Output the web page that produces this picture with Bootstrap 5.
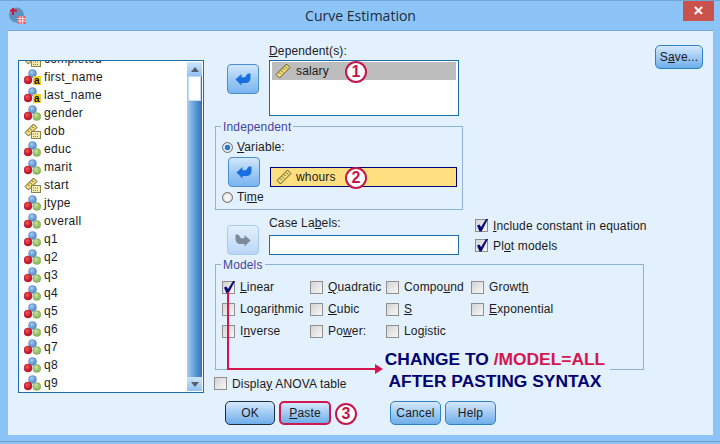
<!DOCTYPE html>
<html lang="en">
<head>
<meta charset="UTF-8" />
<meta name="viewport" content="width=device-width, initial-scale=1" />
<title>Curve Estimation</title>
<link href="https://cdn.jsdelivr.net/npm/bootstrap@5.3.0/dist/css/bootstrap.min.css" rel="stylesheet" />
<style>
  html, body { height: 444px; overflow: hidden; }
  body { background: #8cc4f7; font: 12px/14px "Liberation Sans", Arial, sans-serif; color: #1b1b1b; letter-spacing: .15px; }
  u { text-underline-offset: 1px; }

  .win { height: 442px; border-top: 1px solid #6fa6da; border-bottom: 1px solid #6f9ec9; }
  .titlebar { height: 29px; }
  .app-icon { margin-left: 9px; margin-top: 6px; flex: none; }
  .title-text { font: 14px/29px "Open Sans", sans-serif; letter-spacing: 0; color: #1c2c3c; margin-left: 12px; }
  .close-x { width: 31px; height: 20px; margin: 0 6px 0 0; background: #c9524a; color: #fff; font: 700 17px/20px "Liberation Sans", sans-serif; text-align: center; }
  .client { height: 405px; margin: 0 7px 0 8px; background: #e3f0fd; border-top: 1px solid #74a6d6; padding: 0 10px; position: relative; }

  .var-box { width: 186px; height: 333px; flex: none; margin-top: 29px; border: 1px solid #1c6ea8; background: #fff; overflow: hidden; }
  .var-items { flex: 1; margin-top: -11px; padding-left: 5px; overflow: hidden; }
  .var-row { height: 18px; line-height: 18px; gap: 3px; font-size: 12px; letter-spacing: .3px; white-space: nowrap; }
  .var-row svg { flex: none; }
  .sbar { width: 15px; flex: none; margin: 1px 1px 1px 0; background: linear-gradient(90deg, #a8cdf0, #5c9ad6 55%, #2f74b8); }
  .sbtn { height: 14px; background: linear-gradient(#cfe5fb, #8fc1f2); display: flex; align-items: center; justify-content: center; }
  .sthumb { height: 25px; margin: 0 1px; background: #fff; border: 1px solid #c3dcf4; }
  .tri-up { border: 4px solid transparent; border-top: 0; border-bottom: 5px solid #56606b; }
  .tri-dn { border: 4px solid transparent; border-bottom: 0; border-top: 5px solid #56606b; }

  .right-pane { margin-left: 10px; width: 489px; flex: none; }
  .dep-row { height: 87px; padding-top: 13px; }
  .arrow-btn { width: 32px; height: 30px; flex: none; padding: 0; border: 1px solid #4a8fd0; border-radius: 4px; background: linear-gradient(#d3e7fb, #a0cbf5 50%, #7ab5f0); color: #1a6fe0; display: flex; align-items: center; justify-content: center; }
  .arrow-btn.is-off { border-color: #a9cbea; background: linear-gradient(#e3f0fd, #b9d6f5); color: #7d8b99; }
  .dep-arrow { margin: 20px 0 0 13px; }
  .case-arrow { margin: 6px 0 0 13px; }
  .field-col { width: 190px; margin-left: 10px; }
  .field-lbl { height: 14px; margin-bottom: 2px; white-space: nowrap; }
  .dep-list { height: 56px; border: 1px solid #1c6ea8; background: #fff; padding: 1px 2px; }
  .dep-sel { height: 18px; background: #bdbdbd; padding-left: 3px; gap: 5px; line-height: 18px; }

  .dlg-group { border: 1px solid #8db3d2; border-radius: 0; margin-left: 1px; padding: 0; }
  .dlg-group legend { float: none; width: auto; font: 12px/14px "Liberation Sans", sans-serif; letter-spacing: .15px; color: #45459d; margin: 0 0 0 5px; padding: 2px 2px 0; }
  .ind-group { width: 248px; height: 92px; }
  .pick-row { height: 14px; margin-top: 6px; margin-left: 6px; gap: 4px; }
  .ind-mid { margin: 3px 0 3px 12px; height: 30px; }
  .ind-field { width: 187px; height: 20px; margin: 10px 0 0 10px; border: 1px solid #00007f; background: #ffdf80; padding-left: 5px; gap: 4px; line-height: 19px; }
  .time-row { margin-top: 3px; }

  .case-row { height: 46px; padding-top: 9px; }
  .case-col { margin-left: 10px; width: 190px; }
  .case-input { height: 20px; border: 1px solid #1c6ea8; background: #fff; }
  .case-lbl { height: 14px; margin-top: -3px; margin-bottom: 5px; }
  .opts { margin-left: 16px; gap: 7px; }
  .opt-line { gap: 5px; height: 13px; white-space: nowrap; }

  .models-group { width: 429px; height: 114px; }
  .model-grid { display: grid; grid-template-columns: 88px 76px 85px auto; grid-auto-rows: 22px; margin: 4px 0 0 6px; align-items: center; }
  .model-cell { gap: 5px; white-space: nowrap; }
  .box-off, .box-on { width: 13px; height: 13px; flex: none; display: block; margin: 0; border: 1px solid #8f8f8f; background: linear-gradient(135deg, #d4d4d4, #f7f7f7); }
  .box-on svg { display: block; margin: -1px; overflow: visible; }
  .pick-dot { width: 11px; height: 11px; flex: none; border-radius: 50%; border: 1px solid #6f6f6f; background: radial-gradient(circle, #f4f4f4 40%, #cfcfcf 80%); }
  .pick-dot.is-on { background: radial-gradient(circle, #2a78c8 0 2.6px, #dce6f0 3px); }
  .anova-line { margin-top: 7px; height: 13px; gap: 5px; }

  .dlg-btn { height: 24px; width: 51px; flex: none; padding: 0; border: 1px solid #2b82c5; border-radius: 5px; background: linear-gradient(#d6e8fb, #a6cdf5 45%, #6faeea); font: 12px/14px "Liberation Sans", sans-serif; letter-spacing: .15px; color: #1b1b1b; }
  .dlg-btn:hover { background: linear-gradient(#d6e8fb, #a6cdf5 45%, #6faeea); color: #1b1b1b; border-color: #2b82c5; }
  .save-btn { margin-left: auto; margin-top: 1px; width: 48px; }
  .btn-default { border-color: #1b2f45; width: 50px; }
  .btn-paste { border: 2px solid #d0174f; width: 52px; }
  .btn-bar { margin: 11px 0 0 11px; gap: 4px; }
  .gap-big { margin-left: 55px; }

  .note-dot { position: absolute; width: 22px; height: 22px; border-radius: 50%; background: #fff; border: 2px solid #c4164b; color: #c4164b; font: 700 16px/18px "Liberation Sans", sans-serif; text-align: center; letter-spacing: 0; }
  .dot-a { left: 337px; top: 30px; }
  .dot-b { left: 337px; top: 136px; }
  .dot-c { left: 327px; top: 372px; }
  .note-v { position: absolute; left: 219px; top: 261px; width: 2px; height: 78px; background: #d6154f; }
  .note-h { position: absolute; left: 219px; top: 337px; width: 150px; height: 2px; background: #d6154f; }
  .note-head { position: absolute; left: 367px; top: 333px; border: 5px solid transparent; border-left: 8px solid #d6154f; border-right: 0; }
  .note-text { position: absolute; left: 372px; top: 317px; width: 230px; background: #e3f0fd; text-align: center; font: 700 17.4px/22px "Liberation Sans", sans-serif; letter-spacing: 0; color: #00006e; }
  .note-text b { color: #d6154f; }
</style>
</head>
<body>

<svg width="0" height="0" class="position-absolute">
  <defs>
    <radialGradient id="gBlue" cx=".4" cy=".35"><stop offset="0" stop-color="#a9cbee"/><stop offset="1" stop-color="#5f93cf"/></radialGradient>
    <radialGradient id="gRed" cx=".4" cy=".35"><stop offset="0" stop-color="#ee5a5a"/><stop offset="1" stop-color="#c3142c"/></radialGradient>
    <radialGradient id="gGreen" cx=".4" cy=".35"><stop offset="0" stop-color="#cbe2a0"/><stop offset="1" stop-color="#8fbb62"/></radialGradient>
    <symbol id="ico-balls" viewBox="0 0 17 16">
      <circle cx="8.5" cy="4.5" r="4" fill="url(#gBlue)" stroke="#5a86b8" stroke-width=".5"/>
      <circle cx="12.8" cy="11.5" r="4" fill="url(#gGreen)" stroke="#7da653" stroke-width=".5"/>
      <circle cx="4" cy="11" r="4" fill="url(#gRed)" stroke="#a81228" stroke-width=".5"/>
    </symbol>
    <symbol id="ico-str" viewBox="0 0 17 16">
      <circle cx="8.5" cy="4.5" r="4" fill="url(#gBlue)" stroke="#5a86b8" stroke-width=".5"/>
      <circle cx="4" cy="11" r="4" fill="url(#gRed)" stroke="#a81228" stroke-width=".5"/>
      <rect x="9" y="7" width="8" height="9" fill="#f5cf2a"/>
      <text x="13" y="15" text-anchor="middle" font-family="Liberation Sans" font-weight="700" font-size="10" fill="#111">a</text>
    </symbol>
    <symbol id="ico-ruler" viewBox="0 0 16 16">
      <path d="M1 11.5 11.5 1 15 4.5 4.5 15Z" fill="#f3dd74" stroke="#5c5a33" stroke-width="1"/>
      <path d="M4 9.5l1.5 1.5M6 7.5l2 2M8 5.5l1.5 1.5M10 3.5l2 2" stroke="#5c5a33" stroke-width="1"/>
    </symbol>
    <symbol id="ico-date" viewBox="0 0 17 16">
      <path d="M1 9.5 9.5 1 13 4.5 4.5 13Z" fill="#f3dd74" stroke="#5c5a33" stroke-width="1"/>
      <path d="M4 7.5l1.5 1.5M6 5.5l2 2M8 3.5l1.5 1.5" stroke="#5c5a33" stroke-width="1"/>
      <rect x="7.5" y="8.5" width="9" height="7" fill="#f7ecb0" stroke="#8a8450" stroke-width="1"/>
      <path d="M9 11h6M9 13.5h6" stroke="#8a8450" stroke-dasharray="1 1" stroke-width="1"/>
    </symbol>
    <symbol id="ico-arrow" viewBox="0 0 16 14">
      <path d="M.5 7.5 6.5 2V5.200H10L12.800 1.500H15.500V5.500C15.500 9 13.500 11 10.500 11H6.500V13.500Z" fill="currentColor"/>
    </symbol>
    <symbol id="ico-tick" viewBox="0 0 13 13">
      <path d="M2 6.500 4.500 5.500 6 8 11 0H13L6.500 12.500H4.500Z" fill="#0b0b7a"/>
    </symbol>
  </defs>
</svg>

<div class="win">
  <div class="titlebar d-flex">
    <svg class="app-icon" width="17" height="17" viewBox="0 0 17 17">
      <circle cx="7.5" cy="8" r="7.5" fill="#5f93bf"/>
      <path d="M4 1v7M1 3.5h7" stroke="#d0143c" stroke-width="2"/>
      <rect x="8.5" y="9" width="8" height="8" fill="#e05a6a"/>
      <path d="M8.5 11.500h8M8.500 14h8M11 9v8M13.700 9v8" stroke="#fff" stroke-width=".8"/>
    </svg>
    <div class="title-text flex-grow-1 text-center">Curve Estimation</div>
    <div class="close-x">×</div>
  </div>

  <div class="client d-flex">
    <div class="var-box d-flex">
      <div class="var-items">
        <div class="var-row d-flex align-items-center"><svg width="17" height="16"><use href="#ico-date"/></svg>completed</div>
        <div class="var-row d-flex align-items-center"><svg width="17" height="16"><use href="#ico-str"/></svg>first_name</div>
        <div class="var-row d-flex align-items-center"><svg width="17" height="16"><use href="#ico-str"/></svg>last_name</div>
        <div class="var-row d-flex align-items-center"><svg width="17" height="16"><use href="#ico-balls"/></svg>gender</div>
        <div class="var-row d-flex align-items-center"><svg width="17" height="16"><use href="#ico-date"/></svg>dob</div>
        <div class="var-row d-flex align-items-center"><svg width="17" height="16"><use href="#ico-balls"/></svg>educ</div>
        <div class="var-row d-flex align-items-center"><svg width="17" height="16"><use href="#ico-balls"/></svg>marit</div>
        <div class="var-row d-flex align-items-center"><svg width="17" height="16"><use href="#ico-date"/></svg>start</div>
        <div class="var-row d-flex align-items-center"><svg width="17" height="16"><use href="#ico-balls"/></svg>jtype</div>
        <div class="var-row d-flex align-items-center"><svg width="17" height="16"><use href="#ico-balls"/></svg>overall</div>
        <div class="var-row d-flex align-items-center"><svg width="17" height="16"><use href="#ico-balls"/></svg>q1</div>
        <div class="var-row d-flex align-items-center"><svg width="17" height="16"><use href="#ico-balls"/></svg>q2</div>
        <div class="var-row d-flex align-items-center"><svg width="17" height="16"><use href="#ico-balls"/></svg>q3</div>
        <div class="var-row d-flex align-items-center"><svg width="17" height="16"><use href="#ico-balls"/></svg>q4</div>
        <div class="var-row d-flex align-items-center"><svg width="17" height="16"><use href="#ico-balls"/></svg>q5</div>
        <div class="var-row d-flex align-items-center"><svg width="17" height="16"><use href="#ico-balls"/></svg>q6</div>
        <div class="var-row d-flex align-items-center"><svg width="17" height="16"><use href="#ico-balls"/></svg>q7</div>
        <div class="var-row d-flex align-items-center"><svg width="17" height="16"><use href="#ico-balls"/></svg>q8</div>
        <div class="var-row d-flex align-items-center"><svg width="17" height="16"><use href="#ico-balls"/></svg>q9</div>
      </div>
      <div class="sbar d-flex flex-column">
        <div class="sbtn"><span class="tri-up"></span></div>
        <div class="sthumb"></div>
        <div class="flex-grow-1"></div>
        <div class="sbtn"><span class="tri-dn"></span></div>
      </div>
    </div>

    <div class="right-pane">
      <div class="dep-row d-flex">
        <button class="arrow-btn dep-arrow" type="button"><svg width="16" height="14"><use href="#ico-arrow"/></svg></button>
        <div class="field-col">
          <div class="field-lbl"><u>D</u>ependent(s):</div>
          <div class="dep-list"><div class="dep-sel d-flex align-items-center"><svg width="16" height="16"><use href="#ico-ruler"/></svg>salary</div></div>
        </div>
        <button class="dlg-btn save-btn" type="button">S<u>a</u>ve...</button>
      </div>

      <fieldset class="dlg-group ind-group">
        <legend>Independent</legend>
        <div class="pick-row d-flex align-items-center"><span class="pick-dot is-on"></span><span><u>V</u>ariable:</span></div>
        <div class="ind-mid d-flex">
          <button class="arrow-btn" type="button"><svg width="16" height="14"><use href="#ico-arrow"/></svg></button>
          <div class="ind-field d-flex align-items-center"><svg width="16" height="16"><use href="#ico-ruler"/></svg>whours</div>
        </div>
        <div class="pick-row time-row d-flex align-items-center"><span class="pick-dot"></span><span>Ti<u>m</u>e</span></div>
      </fieldset>

      <div class="case-row d-flex">
        <button class="arrow-btn is-off case-arrow" type="button"><svg width="16" height="14"><use href="#ico-arrow" transform="matrix(-1 0 0 1 16 0)"/></svg></button>
        <div class="case-col">
          <div class="case-lbl">Case La<u>b</u>els:</div>
          <div class="case-input"></div>
        </div>
        <div class="opts d-flex flex-column">
          <div class="opt-line d-flex align-items-center"><span class="box-on"><svg width="13" height="13"><use href="#ico-tick"/></svg></span><span><u>I</u>nclude constant in equation</span></div>
          <div class="opt-line d-flex align-items-center"><span class="box-on"><svg width="13" height="13"><use href="#ico-tick"/></svg></span><span>Pl<u>o</u>t models</span></div>
        </div>
      </div>

      <fieldset class="dlg-group models-group">
        <legend>Models</legend>
        <div class="model-grid">
          <div class="model-cell d-flex align-items-center"><span class="box-on"><svg width="13" height="13"><use href="#ico-tick"/></svg></span><span><u>L</u>inear</span></div>
          <div class="model-cell d-flex align-items-center"><span class="box-off"></span><span><u>Q</u>uadratic</span></div>
          <div class="model-cell d-flex align-items-center"><span class="box-off"></span><span>Compo<u>u</u>nd</span></div>
          <div class="model-cell d-flex align-items-center"><span class="box-off"></span><span>Growt<u>h</u></span></div>
          <div class="model-cell d-flex align-items-center"><span class="box-off"></span><span>Logari<u>t</u>hmic</span></div>
          <div class="model-cell d-flex align-items-center"><span class="box-off"></span><span><u>C</u>ubic</span></div>
          <div class="model-cell d-flex align-items-center"><span class="box-off"></span><span><u>S</u></span></div>
          <div class="model-cell d-flex align-items-center"><span class="box-off"></span><span><u>E</u>xponential</span></div>
          <div class="model-cell d-flex align-items-center"><span class="box-off"></span><span>I<u>n</u>verse</span></div>
          <div class="model-cell d-flex align-items-center"><span class="box-off"></span><span>Po<u>w</u>er:</span></div>
          <div class="model-cell d-flex align-items-center"><span class="box-off"></span><span>Lo<u>g</u>istic</span></div>
        </div>
      </fieldset>

      <div class="anova-line d-flex align-items-center"><span class="box-off"></span><span>Displa<u>y</u> ANOVA table</span></div>

      <div class="btn-bar d-flex">
        <button class="btn dlg-btn btn-default" type="button">OK</button>
        <button class="btn dlg-btn btn-paste" type="button"><u>P</u>aste</button>
        <button class="btn dlg-btn gap-big" type="button">Cancel</button>
        <button class="btn dlg-btn" type="button">Help</button>
      </div>
    </div>

    <div class="note-text">CHANGE TO <b>/MODEL=ALL</b><br />AFTER PASTING SYNTAX</div>
    <div class="note-v"></div>
    <div class="note-h"></div>
    <div class="note-head"></div>
    <span class="note-dot dot-a">1</span>
    <span class="note-dot dot-b">2</span>
    <span class="note-dot dot-c">3</span>
  </div>
</div>

<script src="https://cdn.jsdelivr.net/npm/bootstrap@5.3.0/dist/js/bootstrap.bundle.min.js"></script>
</body>
</html>
